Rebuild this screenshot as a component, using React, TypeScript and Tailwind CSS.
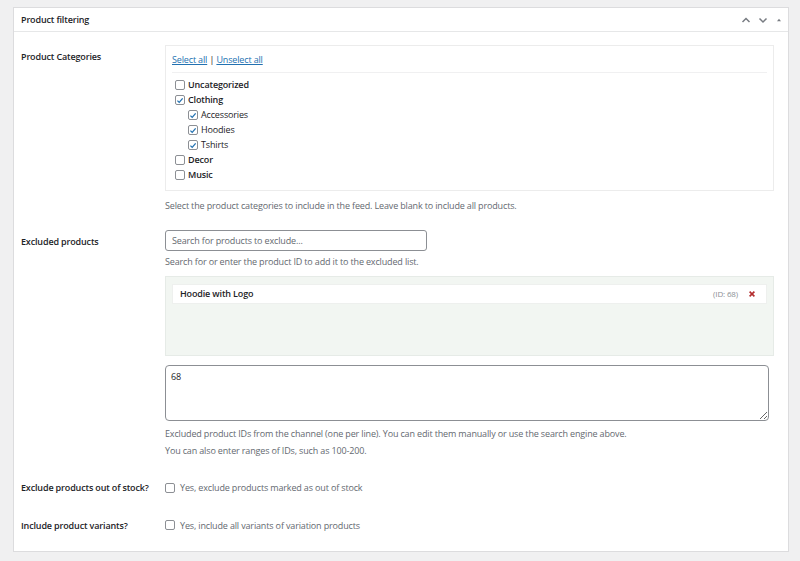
import React from 'react';

type Category = {
  name: string;
  checked: boolean;
  child?: boolean;
};

const categories: Category[] = [
  { name: 'Uncategorized', checked: false },
  { name: 'Clothing', checked: true },
  { name: 'Accessories', checked: true, child: true },
  { name: 'Hoodies', checked: true, child: true },
  { name: 'Tshirts', checked: true, child: true },
  { name: 'Decor', checked: false },
  { name: 'Music', checked: false },
];

const Checkbox: React.FC<{ checked?: boolean }> = ({ checked }) => (
  <span className="flex h-[10px] w-[10px] shrink-0 items-center justify-center rounded-[2px] border border-[#8c8f94] bg-white">
    {checked && (
      <svg viewBox="0 0 10 10" className="h-[9px] w-[9px]">
        <path d="M1.8 5.2 L4 7.4 L8.3 2.3" fill="none" stroke="#2271b1" strokeWidth="1.6" />
      </svg>
    )}
  </span>
);

const App: React.FC = () => {
  return (
    <div
      className="min-h-screen bg-[#f0f0f1] pl-[13px] pr-[11px] pt-[7px] text-[9px] tracking-[-0.15px] text-[#1d2327]"
      style={{ fontFamily: '"Open Sans", "Noto Sans", sans-serif' }}
    >
      <div className="h-[545px] border border-[#dcdcde] bg-white">
        {/* header */}
        <div className="flex h-[24px] items-center justify-between border-b border-[#e6e7e8] pl-[7px] pr-[5px]">
          <h2 className="text-[9px] font-semibold">Product filtering</h2>
          <div className="flex items-center gap-[7px] text-[#787c82]">
            <svg viewBox="0 0 10 10" className="h-[10px] w-[10px]">
              <path d="M1.5 7 L5 3.5 L8.5 7" fill="none" stroke="currentColor" strokeWidth="1.5" />
            </svg>
            <svg viewBox="0 0 10 10" className="h-[10px] w-[10px]">
              <path d="M1.5 3.5 L5 7 L8.5 3.5" fill="none" stroke="currentColor" strokeWidth="1.5" />
            </svg>
            <svg viewBox="0 0 10 10" className="h-[8px] w-[8px]">
              <path d="M2.5 6.5 L5 3.5 L7.5 6.5 Z" fill="currentColor" />
            </svg>
          </div>
        </div>

        <div className="pl-[7px] pr-[14px] pt-[13px]">
          {/* categories */}
          <div className="grid grid-cols-[144px_1fr]">
            <div className="pt-[5px] font-semibold">Product Categories</div>
            <div>
              <div className="h-[146px] border border-[#ececec] px-[6px] pt-[7px]">
                <div className="border-b border-[#f0f0f1] pb-[5px] text-[#2271b1]">
                  <a href="#" className="underline">Select all</a>
                  <span className="text-[#1d2327]"> | </span>
                  <a href="#" className="underline">Unselect all</a>
                </div>
                <ul className="pt-[5px]">
                  {categories.map((c) => (
                    <li
                      key={c.name}
                      className={`flex h-[15px] items-center gap-[3px] ${c.child ? 'pl-[16px]' : 'pl-[3px] font-semibold'}`}
                    >
                      <Checkbox checked={c.checked} />
                      <span>{c.name}</span>
                    </li>
                  ))}
                </ul>
              </div>
              <p className="mt-[8px] text-[#646970]">
                Select the product categories to include in the feed. Leave blank to include all products.
              </p>
            </div>
          </div>

          {/* excluded products */}
          <div className="mt-[17px] grid grid-cols-[144px_1fr]">
            <div className="pt-[5px] font-semibold">Excluded products</div>
            <div>
              <input
                className="block h-[21px] w-[262px] rounded-[3px] border border-[#8c8f94] px-[6px] text-[9px] placeholder:text-[#646970]"
                placeholder="Search for products to exclude..."
              />
              <p className="mt-[4px] text-[#646970]">
                Search for or enter the product ID to add it to the excluded list.
              </p>
              <div className="mt-[8px] h-[80px] border border-[#e6ebe7] bg-[#f2f6f2] px-[6px] pt-[7px]">
                <div className="flex h-[20px] items-center justify-between border border-[#eef0ee] bg-white pl-[7px] pr-[10px]">
                  <span className="font-semibold">Hoodie with Logo</span>
                  <span className="flex items-center gap-[10px]">
                    <span className="text-[8px] text-[#8c8f94]">(ID: 68)</span>
                    <svg viewBox="0 0 10 10" className="h-[8px] w-[8px]">
                      <path d="M2 2 L8 8 M8 2 L2 8" stroke="#b32d2e" strokeWidth="2" />
                    </svg>
                  </span>
                </div>
              </div>
              <textarea
                className="mt-[9px] block h-[56px] w-[604px] resize-y rounded-[4px] border border-[#8c8f94] px-[5px] py-[4px] text-[9px]"
                defaultValue="68"
              />
              <p className="mt-[6px] text-[#646970]">
                Excluded product IDs from the channel (one per line). You can edit them manually or use the search engine above.
              </p>
              <p className="mt-[3px] text-[#646970]">You can also enter ranges of IDs, such as 100-200.</p>
            </div>
          </div>

          {/* out of stock */}
          <div className="mt-[24px] grid grid-cols-[144px_1fr] items-center">
            <div className="font-semibold">Exclude products out of stock?</div>
            <label className="flex items-center gap-[5px] text-[#646970]">
              <Checkbox />
              <span>Yes, exclude products marked as out of stock</span>
            </label>
          </div>

          {/* variants */}
          <div className="mt-[24px] grid grid-cols-[144px_1fr] items-center">
            <div className="font-semibold">Include product variants?</div>
            <label className="flex items-center gap-[5px] text-[#646970]">
              <Checkbox />
              <span>Yes, include all variants of variation products</span>
            </label>
          </div>
        </div>
      </div>
    </div>
  );
};

export default App;
